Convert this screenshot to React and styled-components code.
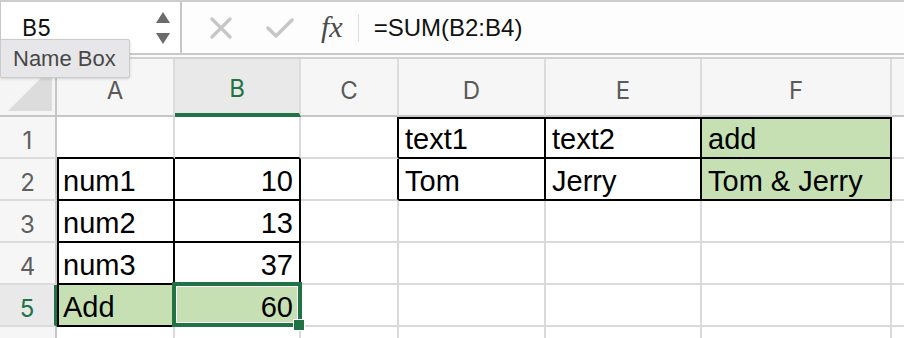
import React from 'react';
import styled, { createGlobalStyle } from 'styled-components';

const GREEN = '#217346';
const GRID = '#dadada';

const GlobalStyle = createGlobalStyle`
  html, body {
    margin: 0;
    padding: 0;
    background: #fff;
    overflow: hidden;
  }
`;

const Page = styled.div`
  position: relative;
  width: 904px;
  height: 338px;
  overflow: hidden;
  font-family: 'Liberation Sans', Arial, sans-serif;
`;

const Toolbar = styled.div`
  display: flex;
  height: 51px;
  border-top: 2px solid #cdcdcd;
  border-bottom: 2px solid #c9c9c9;
  background: #fff;
`;

const Gap = styled.div`
  height: 2px;
  border-bottom: 2px solid #d2d2d2;
  background: #fafafa;
`;

const NameBox = styled.div`
  display: flex;
  align-items: center;
  justify-content: space-between;
  width: 148px;
  padding: 0 10px 0 21px;
  border-left: 1px solid #c8c8c8;
  border-right: 2px solid #c6c6c6;
  font: 23px 'Inter', sans-serif;
  color: #111;
`;

const Arrows = styled.div`
  display: flex;
  flex-direction: column;
  gap: 10px;
`;

const FormulaBar = styled.div`
  flex: 1;
  display: flex;
  align-items: center;
  background: #fdfdfd;
`;

const ToolIcon = styled.svg`
  flex: none;
  margin-left: ${p => p.$gap}px;
`;

const Fx = styled.span`
  margin-left: 27px;
  font: italic 30px 'Liberation Serif', serif;
  color: #4a4a4a;
  position: relative;
  top: -1px;
`;

const Divider = styled.div`
  width: 1px;
  height: 28px;
  margin-left: 15px;
  background: #dcdcdc;
`;

const Formula = styled.span`
  margin-left: 15px;
  font: 24px 'Liberation Sans', Arial, sans-serif;
  color: #111;
`;

const Tooltip = styled.div`
  position: absolute;
  left: 0;
  top: 39px;
  width: 116px;
  height: 37px;
  padding-left: 12px;
  display: flex;
  align-items: center;
  background: #e7e7e9;
  border: 1px solid #cbcbcb;
  border-radius: 2px;
  box-shadow: 0 1px 3px rgba(0, 0, 0, 0.15);
  font: 22px 'Liberation Sans', Arial, sans-serif;
  color: #474747;
  z-index: 5;
`;

const Sheet = styled.div`
  display: grid;
  grid-template-columns: 57px 118px 126px 98px 147px 156px 190px 1fr;
  grid-template-rows: 58px repeat(6, 42px);
`;

const Corner = styled.div`
  background: #f5f5f5;
  border-right: 2px solid #c6c6c6;
  border-bottom: 2px solid #c6c6c6;
`;

const ColHeader = styled.div`
  display: flex;
  align-items: center;
  justify-content: center;
  padding-top: ${p => (p.$active ? 4 : 6)}px;
  background: ${p => (p.$active ? '#e9e9e9' : '#f6f6f6')};
  border-right: 2px solid #dcdcdc;
  border-bottom: ${p => (p.$active ? `4px solid ${GREEN}` : '2px solid #c6c6c6')};
  font: 24px 'Inter', sans-serif;
  color: ${p => (p.$active ? GREEN : '#5a5a5a')};
`;

const RowHeader = styled.div`
  display: flex;
  align-items: center;
  justify-content: center;
  padding-top: 6px;
  background: ${p => (p.$active ? '#e9e9e9' : '#f6f6f6')};
  border-right: ${p => (p.$active ? `3px solid ${GREEN}` : '2px solid #c6c6c6')};
  border-bottom: 2px solid #dcdcdc;
  font: 24px 'Inter', sans-serif;
  color: ${p => (p.$active ? GREEN : '#5f5f5f')};
`;

const Cell = styled.div`
  position: relative;
  display: flex;
  align-items: flex-end;
  justify-content: ${p => (p.$align === 'right' ? 'flex-end' : 'flex-start')};
  padding: 0 6px 3px 6px;
  background: ${p => (p.$fill ? '#c6e0b4' : '#fff')};
  border-right: 2px solid ${p => p.$right};
  border-bottom: 2px solid ${p => p.$bottom};
  box-shadow: ${p =>
    [p.$insetL && 'inset 2px 0 0 #000', p.$insetT && 'inset 0 2px 0 #000']
      .filter(Boolean)
      .join(', ') || 'none'};
  font: 29px/29px 'Liberation Sans', Arial, sans-serif;
  color: #000;
  white-space: nowrap;
`;

const Selection = styled.div`
  position: absolute;
  top: -3px;
  left: -3px;
  right: -3px;
  bottom: -2px;
  border: 4px solid ${GREEN};
  box-shadow: inset 0 0 0 1px #fff;
  pointer-events: none;
  z-index: 2;
`;

const Handle = styled.div`
  position: absolute;
  right: -5px;
  bottom: -5px;
  width: 10px;
  height: 10px;
  background: ${GREEN};
  box-shadow: 0 0 0 1px #fff;
  z-index: 3;
`;

const columns = ['A', 'B', 'C', 'D', 'E', 'F', ''];

const data = [
  ['', '', '', 'text1', 'text2', 'add'],
  ['num1', 10, '', 'Tom', 'Jerry', 'Tom & Jerry'],
  ['num2', 13],
  ['num3', 37],
  ['Add', 60],
  [],
];

const boxed = (r, c) =>
  (r >= 2 && r <= 5 && c >= 0 && c <= 1) || (r >= 1 && r <= 2 && c >= 3 && c <= 5);

const filled = (r, c) => (r === 5 && c <= 1) || (r <= 2 && c === 5);

const App = () => (
  <Page>
    <GlobalStyle />
    <Toolbar>
      <NameBox>
        <span>B5</span>
        <Arrows>
          <svg width="14" height="11" viewBox="0 0 14 11">
            <polygon points="7,0 14,11 0,11" fill="#6b6b6b" />
          </svg>
          <svg width="14" height="11" viewBox="0 0 14 11">
            <polygon points="0,0 14,0 7,11" fill="#6b6b6b" />
          </svg>
        </Arrows>
      </NameBox>
      <FormulaBar>
        <ToolIcon $gap={28} width="22" height="22" viewBox="0 0 22 22">
          <path d="M2 2 L20 20 M20 2 L2 20" stroke="#c6c6c6" strokeWidth="3.2" strokeLinecap="round" />
        </ToolIcon>
        <ToolIcon $gap={34} width="28" height="22" viewBox="0 0 28 22">
          <path d="M2 11 L10 19 L26 3" fill="none" stroke="#c6c6c6" strokeWidth="3.4" strokeLinecap="round" strokeLinejoin="round" />
        </ToolIcon>
        <Fx>fx</Fx>
        <Divider />
        <Formula>=SUM(B2:B4)</Formula>
      </FormulaBar>
    </Toolbar>
    <Gap />
    <Tooltip>Name Box</Tooltip>
    <Sheet>
      <Corner>
        <svg width="55" height="56" viewBox="0 0 55 56">
          <polygon points="8,52 52,52 52,8" fill="#dcdcdc" />
        </svg>
      </Corner>
      {columns.map((col, c) => (
        <ColHeader key={c} $active={col === 'B'}>{col}</ColHeader>
      ))}
      {data.map((row, i) => {
        const r = i + 1;
        return (
          <React.Fragment key={r}>
            {/* row 6 sits below the fold; its number is not shown */}
            <RowHeader $active={r === 5}>{r < 6 ? r : ''}</RowHeader>
            {columns.map((_, c) => {
              const v = row[c];
              const isB5 = r === 5 && c === 1;
              return (
                <Cell
                  key={c}
                  $align={typeof v === 'number' ? 'right' : 'left'}
                  $fill={filled(r, c)}
                  $right={boxed(r, c) || boxed(r, c + 1) ? '#000' : GRID}
                  $bottom={boxed(r, c) || boxed(r + 1, c) ? '#000' : GRID}
                  $insetL={boxed(r, c) && c === 0}
                  $insetT={boxed(r, c) && r === 1}
                >
                  {v}
                  {isB5 && <Selection />}
                  {isB5 && <Handle />}
                </Cell>
              );
            })}
          </React.Fragment>
        );
      })}
    </Sheet>
  </Page>
);

export default App;
